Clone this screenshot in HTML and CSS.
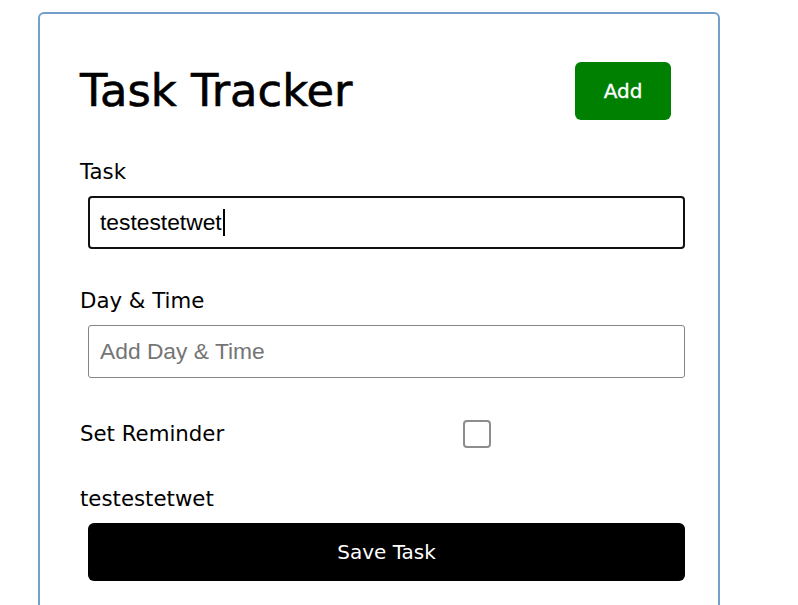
FILE: index.html
```
<!DOCTYPE html>
<html lang="en">
<head>
<meta charset="utf-8">
<title>Task Tracker</title>
<link rel="stylesheet" href="styles.css">
</head>
<body>
<div class="container">
  <header class="header">
    <h1 class="title">Task Tracker</h1>
    <button class="btn btn-add" type="button">Add</button>
  </header>
  <form class="add-form">
    <div class="form-control">
      <label class="field-label" for="task">Task</label>
      <div class="input-wrap">
        <input class="field-input is-focused" id="task" type="text" value="testestetwet" placeholder="Add Task">
        <span class="caret"></span>
      </div>
    </div>
    <div class="form-control form-control-day">
      <label class="field-label" for="day">Day &amp; Time</label>
      <input class="field-input field-input-day" id="day" type="text" placeholder="Add Day &amp; Time">
    </div>
    <div class="form-control-check">
      <label class="field-label check-label" for="reminder">Set Reminder</label>
      <div class="check-area">
        <input class="check-box" id="reminder" type="checkbox">
      </div>
    </div>
    <p class="preview">testestetwet</p>
    <button class="btn btn-block" type="submit">Save Task</button>
  </form>
</div>
</body>
</html>
```
FILE: styles.css
```
html, body {
  margin: 0;
  padding: 0;
  overflow: hidden;
  background: #ffffff;
}

body {
  font-family: "DejaVu Sans", "Noto Sans", sans-serif;
  color: #000000;
}

.container {
  box-sizing: border-box;
  width: 682px;
  min-height: 700px;
  margin: 12px 0 0 38px;
  padding: 40px;
  border: 2px solid #72a0cb;
  border-radius: 6px;
}

.header {
  display: flex;
  justify-content: space-between;
  align-items: center;
  height: 74px;
}

.title {
  margin: 0;
  font-size: 44.8px;
  font-weight: normal;
  line-height: 60px;
  -webkit-text-stroke: 0.6px #000000;
}

.btn {
  border: none;
  color: #ffffff;
  font-family: "DejaVu Sans", "Noto Sans", sans-serif;
  font-size: 20px;
  border-radius: 6px;
  cursor: pointer;
  padding: 0;
}

.btn-add {
  width: 96px;
  height: 58px;
  margin-right: 7px;
  background: #008000;
  -webkit-text-stroke: 0.3px #ffffff;
}

.add-form {
  margin: 0;
}

.form-control {
  padding-top: 27.6px;
}

.form-control-day {
  padding-top: 36px;
}

.field-label {
  display: block;
  font-size: 21.3px;
  line-height: 32px;
}

.input-wrap {
  position: relative;
}

.field-input {
  display: block;
  box-sizing: border-box;
  width: 597px;
  height: 53px;
  margin: 8.4px 0 0 8px;
  padding: 0 10px;
  font-family: "Liberation Sans", Arial, sans-serif;
  font-size: 22.8px;
  color: #000000;
  background: #ffffff;
  border: 1px solid #858585;
  border-radius: 3px;
  outline: none;
}

.field-input-day {
  margin-top: 8.5px;
  padding-left: 11px;
}

.field-input::placeholder {
  color: #757575;
}

.field-input.is-focused {
  border: 2px solid #111111;
  border-radius: 4px;
}

.caret {
  position: absolute;
  left: 143px;
  top: 13px;
  width: 1.5px;
  height: 27px;
  background: #000000;
}

.form-control-check {
  display: flex;
  align-items: center;
  height: 42px;
  margin-top: 34.5px;
}

.check-label {
  flex: 1;
}

.check-area {
  flex: 2;
  display: flex;
  justify-content: center;
  padding-right: 3px;
}

.check-box {
  -webkit-appearance: none;
  appearance: none;
  box-sizing: border-box;
  width: 28px;
  height: 28px;
  margin: 0;
  border: 2px solid #8d8d8d;
  border-radius: 4px;
  background: #ffffff;
}

.preview {
  margin: 27.6px 0 0 0;
  font-size: 21.3px;
  line-height: 32px;
}

.btn-block {
  display: block;
  width: 597px;
  height: 58px;
  margin: 8.4px 0 0 8px;
  background: #000000;
}
```
